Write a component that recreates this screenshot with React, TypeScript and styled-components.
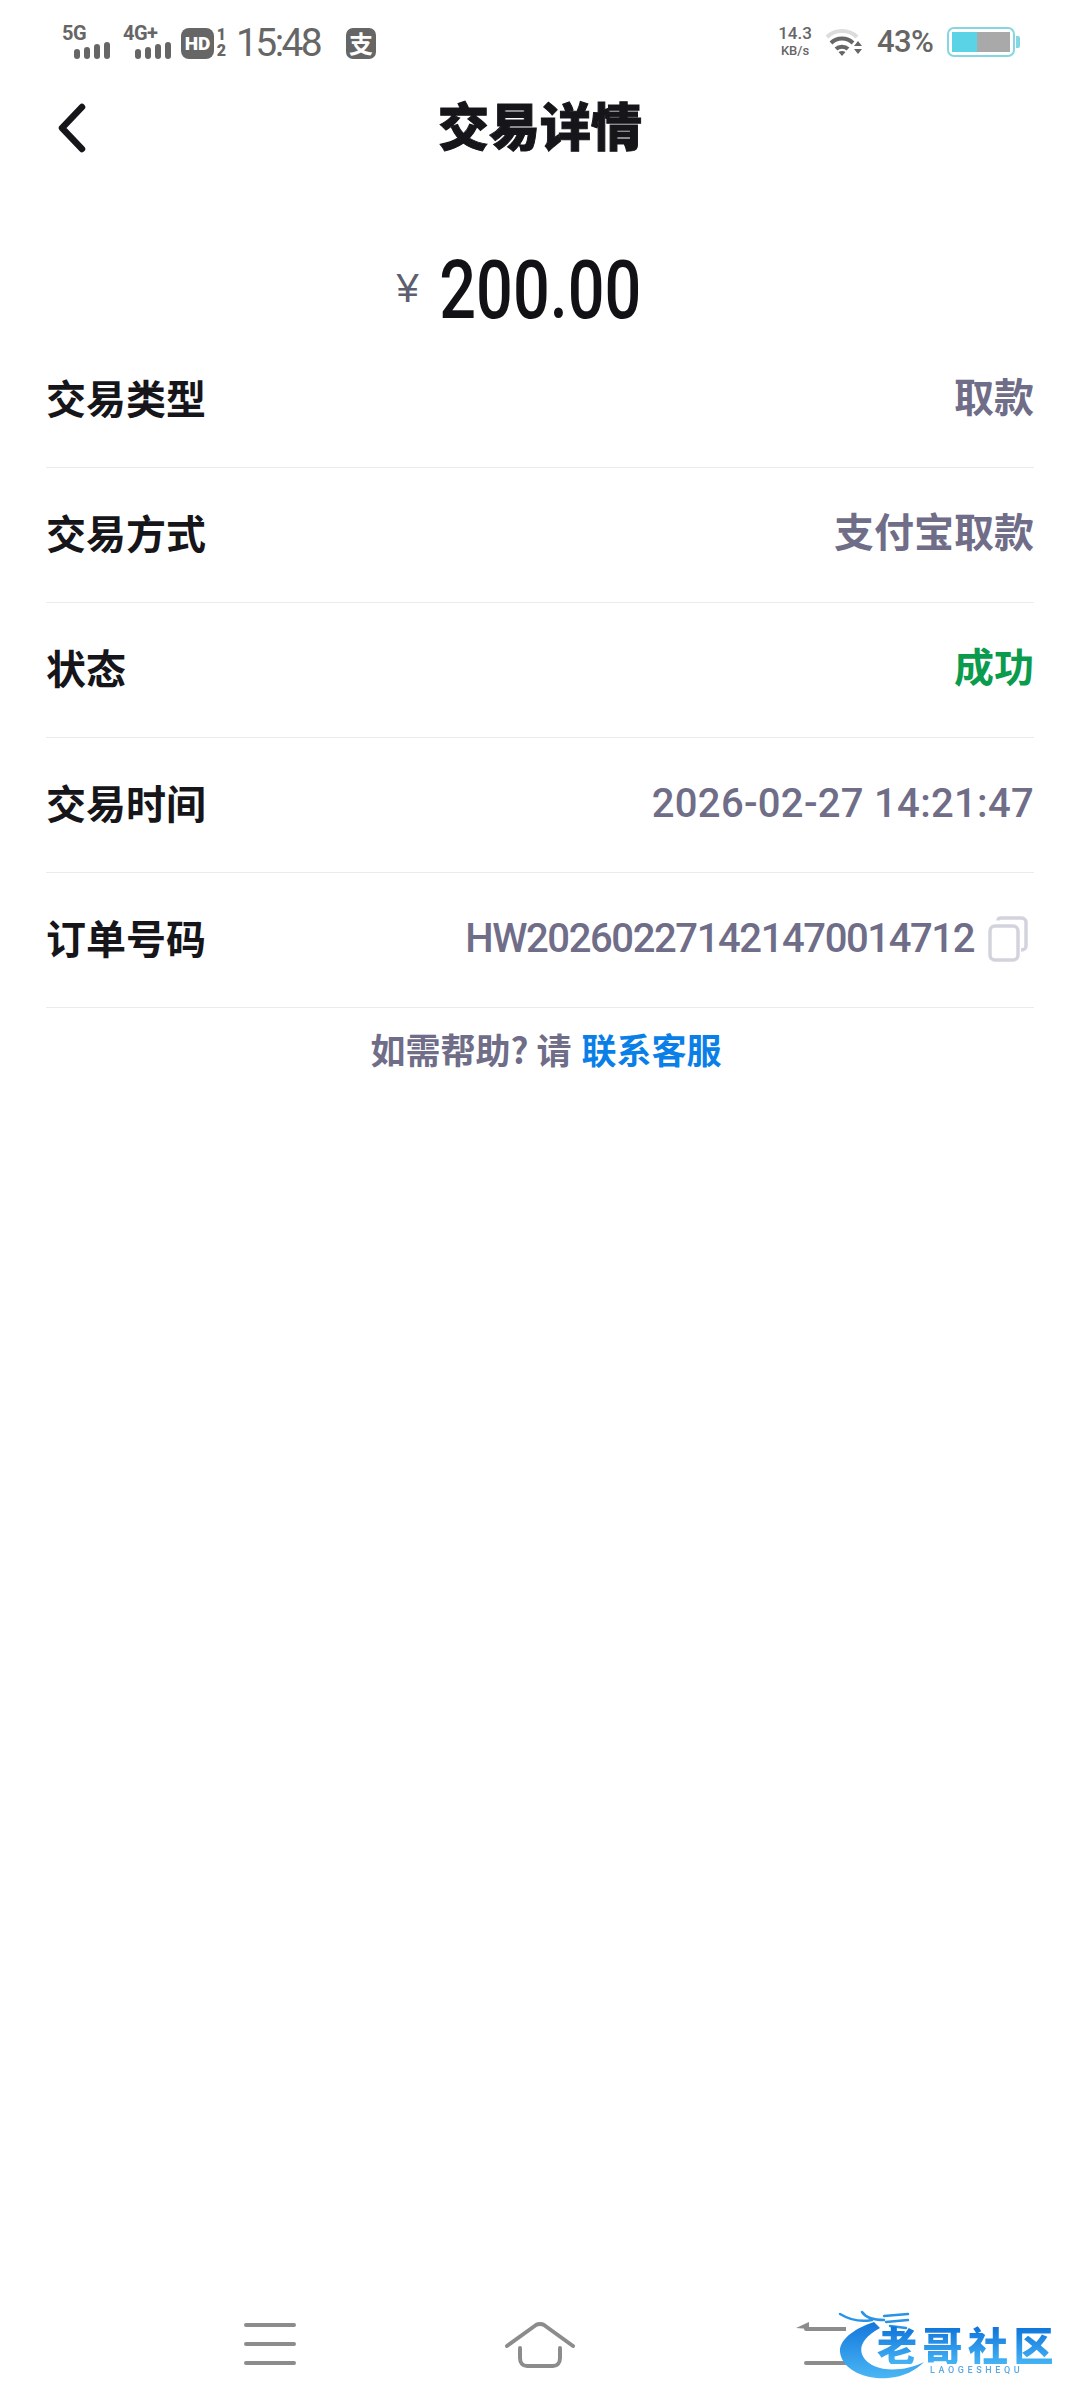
import React from "react";
import styled, { createGlobalStyle } from "styled-components";

const CJK = `"Noto Sans CJK SC", "Noto Sans", sans-serif`;

const Global = createGlobalStyle`
  html, body { margin: 0; padding: 0; background: #fff; }
  #root { width: 1080px; }
`;

const Page = styled.div`
  width: 1080px;
  height: 2408px;
  display: flex;
  flex-direction: column;
  background: #fff;
  overflow: hidden;
  font-family: ${CJK};
`;

const StatusBar = styled.div`
  height: 70px;
  box-sizing: border-box;
  padding: 24px 60px 0 62px;
  display: flex;
  justify-content: space-between;
  align-items: flex-start;
  color: #666;
`;

const StatusGroup = styled.div`
  display: flex;
  align-items: flex-start;
`;

const Signal = styled.div<{ $gap: number }>`
  width: 48px;
  height: 36px;
  margin-right: ${(p) => p.$gap}px;
  display: flex;
  flex-direction: column;
  align-items: flex-start;
`;

const SignalLabel = styled.span`
  font: 700 20px/19px "Roboto", sans-serif;
  letter-spacing: -0.5px;
  color: #666;
`;

const SignalBars = styled.svg`
  align-self: flex-end;
  margin-top: -1px;
`;

const HdBadge = styled.span`
  width: 33px;
  height: 31px;
  margin-top: 4px;
  background: #666;
  border-radius: 8px;
  color: #fff;
  font: 900 19px/31px "Roboto", sans-serif;
  text-align: center;
`;

const SimStack = styled.span`
  width: 11px;
  margin: 3px 9px 0 2px;
  display: flex;
  flex-direction: column;
  font: 900 16px/16px "Roboto", sans-serif;
  color: #666;
  text-align: center;
`;

const Clock = styled.span`
  font: 400 39px/38px "Roboto", sans-serif;
  letter-spacing: -2.6px;
  color: #666;
  width: 110px;
`;

const AppBadge = styled.span`
  width: 30px;
  height: 31px;
  margin-top: 4px;
  background: #666;
  border-radius: 7px;
  color: #fff;
  font: 700 24px/30px ${CJK};
  text-align: center;
`;

const Speed = styled.span`
  display: flex;
  flex-direction: column;
  align-items: center;
  width: 34px;
  margin-right: 14px;
  font-family: "Roboto", sans-serif;
  font-weight: 500;
  color: #666;
`;

const SpeedValue = styled.span`
  font-size: 17px;
  line-height: 19px;
`;

const SpeedUnit = styled.span`
  font-size: 13px;
  line-height: 15px;
`;

const WifiIcon = styled.svg`
  margin: 4px 15px 0 0;
`;

const Percent = styled.span`
  font: 500 31px/36px "Roboto", sans-serif;
  letter-spacing: -0.6px;
  color: #666;
  width: 56px;
  margin-right: 14px;
`;

const Battery = styled.span`
  width: 68px;
  height: 30px;
  box-sizing: border-box;
  margin-top: 3px;
  padding: 3px;
  border: 2px solid #84d6e2;
  border-radius: 7px;
  display: flex;
`;

const BatteryFill = styled.span<{ $color: string; $w: number }>`
  width: ${(p) => p.$w}px;
  background: ${(p) => p.$color};
`;

const BatteryTip = styled.span`
  width: 4px;
  height: 12px;
  margin: 12px 0 0 1px;
  background: #84d6e2;
  border-radius: 0 2px 2px 0;
`;

const Header = styled.header`
  height: 116px;
  display: grid;
  grid-template-columns: 1fr auto 1fr;
  align-items: center;
  padding: 0 56px;
`;

const Title = styled.h1`
  margin: 0 0 9px;
  font: 900 51px/60px ${CJK};
  color: #15151a;
  -webkit-text-stroke: 1px #15151a;
`;

const AmountRow = styled.div`
  height: 147px;
  box-sizing: border-box;
  padding-top: 64px;
  display: grid;
  grid-template-columns: 1fr auto 1fr;
  align-items: center;
  align-content: start;
`;

const Yen = styled.span`
  justify-self: end;
  margin-right: -5px;
  font: 400 40px/52px "Liberation Sans", sans-serif;
  color: #5d5f70;
  margin-top: -6px;
`;

const Amount = styled.span`
  display: inline-block;
  font: 500 81px/82px "Roboto", sans-serif;
  color: #121216;
  transform: scaleX(0.8);
`;

const List = styled.div`
  margin: 0 46px;
`;

const Row = styled.div`
  height: 135px;
  box-sizing: border-box;
  border-bottom: 1px solid #ebebee;
  display: flex;
  align-items: center;
  justify-content: space-between;
  padding-bottom: 2px;
`;

const Label = styled.span`
  margin-bottom: 5px;
  font: 700 40px/50px ${CJK};
  color: #15151a;
`;

const Value = styled.span<{ $color?: string; $weight?: number; $track?: number }>`
  font: ${(p) => p.$weight ?? 700} 40px/50px "Roboto", ${CJK};
  letter-spacing: ${(p) => p.$track ?? 0}px;
  color: ${(p) => p.$color ?? "#6f6d88"};
`;

const ValueGroup = styled.span`
  display: flex;
  align-items: center;
  gap: 14px;
`;

const CopyIcon = styled.svg`
  margin-right: 6px;
`;

const Help = styled.div`
  height: 84px;
  box-sizing: border-box;
  padding: 0 0 2px 12px;
  display: flex;
  align-items: center;
  justify-content: center;
  gap: 10px;
  font: 700 35px/44px ${CJK};
  color: #6f6d88;
`;

const HelpLink = styled.span`
  color: #0a7fe8;
`;

const NavBar = styled.nav`
  position: relative;
  margin-top: auto;
  height: 128px;
  box-sizing: border-box;
  padding: 42px 135px 0;
  display: grid;
  grid-template-columns: repeat(3, 270px);
  align-items: start;
  justify-items: center;
`;

const NavIcon = styled.svg<{ $shift?: number }>`
  margin-left: ${(p) => p.$shift ?? 0}px;
`;

const Logo = styled.div`
  position: absolute;
  left: 836px;
  top: 30px;
  width: 232px;
  height: 76px;
  filter: blur(0.6px);
`;

const LogoRing = styled.svg`
  position: absolute;
  left: 0;
  top: 0;
`;

const LogoName = styled.span`
  position: absolute;
  left: 41px;
  top: 14px;
  font: 900 40px/40px ${CJK};
  letter-spacing: 5.5px;
  white-space: nowrap;
  background: linear-gradient(180deg, #0b6fd8, #45b4f5);
  -webkit-background-clip: text;
  background-clip: text;
  color: transparent;
`;

const LogoSub = styled.span`
  position: absolute;
  left: 94px;
  top: 55px;
  font: 500 9px/11px "Roboto", sans-serif;
  letter-spacing: 3.6px;
  color: #5aa9e6;
  white-space: nowrap;
`;

const Bars = () => (
  <SignalBars width="36" height="18" viewBox="0 0 36 18" fill="#666">
    <rect x="0" y="7" width="6" height="10" rx="3" />
    <rect x="10" y="5" width="6" height="12" rx="3" />
    <rect x="20" y="2" width="6" height="15" rx="3" />
    <rect x="30" y="0" width="6" height="17" rx="3" />
  </SignalBars>
);

const rows: { label: string; value: string; color?: string; weight?: number; track?: number }[] = [
  { label: "交易类型", value: "取款" },
  { label: "交易方式", value: "支付宝取款" },
  { label: "状态", value: "成功", color: "#0a9b4d" },
  { label: "交易时间", value: "2026-02-27 14:21:47", weight: 500, track: 0.3 },
];

export default function App() {
  return (
    <Page>
      <Global />
      <StatusBar>
        <StatusGroup>
          <Signal $gap={13}>
            <SignalLabel>5G</SignalLabel>
            <Bars />
          </Signal>
          <Signal $gap={10}>
            <SignalLabel>4G+</SignalLabel>
            <Bars />
          </Signal>
          <HdBadge>HD</HdBadge>
          <SimStack>
            <span>1</span>
            <span>2</span>
          </SimStack>
          <Clock>15:48</Clock>
          <AppBadge>支</AppBadge>
        </StatusGroup>
        <StatusGroup>
          <Speed>
            <SpeedValue>14.3</SpeedValue>
            <SpeedUnit>KB/s</SpeedUnit>
          </Speed>
          <WifiIcon width="36" height="30" viewBox="0 0 36 30" fill="none" strokeLinecap="butt">
            <path d="M1 9C9 1 23 1 31 9" stroke="#dcdcdc" strokeWidth="4" />
            <path d="M5 15C11 9 21 9 27 15" stroke="#666" strokeWidth="4" />
            <path d="M10 21C13 18 19 18 22 21" stroke="#666" strokeWidth="4" />
            <path d="M12.5 24L16 28L19.5 24C17.5 22.8 14.5 22.8 12.5 24Z" fill="#666" />
            <path d="M28 18L32 13L36 18ZM28 21L36 21L32 26Z" fill="#666" />
          </WifiIcon>
          <Percent>43%</Percent>
          <Battery>
            <BatteryFill $color="#5bd3e6" $w={25} />
            <BatteryFill $color="#a9a9a9" $w={33} />
          </Battery>
          <BatteryTip />
        </StatusGroup>
      </StatusBar>

      <Header>
        <svg width="32" height="52" viewBox="0 0 32 52" fill="none">
          <path d="M26 5L6 26L26 47" stroke="#15151a" strokeWidth="6.5" strokeLinecap="round" strokeLinejoin="round" />
        </svg>
        <Title>交易详情</Title>
      </Header>

      <AmountRow>
        <Yen>¥</Yen>
        <Amount>200.00</Amount>
      </AmountRow>

      <List>
        {rows.map((r) => (
          <Row key={r.label}>
            <Label>{r.label}</Label>
            <Value $color={r.color} $weight={r.weight} $track={r.track}>
              {r.value}
            </Value>
          </Row>
        ))}
        <Row>
          <Label>订单号码</Label>
          <ValueGroup>
            <Value $weight={500} $track={-1.4}>
              HW202602271421470014712
            </Value>
            <CopyIcon width="40" height="46" viewBox="0 0 40 46" fill="none" stroke="#d3d3de" strokeWidth="3.5">
              <path d="M10 4.5C10 2.5 11.5 2 13 2H33C35.5 2 38 3.5 38 6V30C38 32 36.5 34 33 34" />
              <rect x="2" y="10" width="28" height="34" rx="5" fill="#fff" />
            </CopyIcon>
          </ValueGroup>
        </Row>
      </List>

      <Help>
        <span>如需帮助? 请</span>
        <HelpLink>联系客服</HelpLink>
      </Help>

      <NavBar>
        <NavIcon width="52" height="44" viewBox="0 0 52 44" fill="none" stroke="#8c8c8c" strokeWidth="4" strokeLinecap="round">
          <path d="M2 3H50M2 22H50M2 41H50" />
        </NavIcon>
        <NavIcon width="70" height="46" viewBox="0 0 70 46" fill="none" stroke="#8c8c8c" strokeWidth="4" strokeLinecap="round" strokeLinejoin="round">
          <path d="M2 24L31 3C33 1.8 37 1.8 39 3L68 24" />
          <path d="M15 26V36C15 41 18 44 22 44H48C52 44 55 41 55 36V26" />
        </NavIcon>
        <NavIcon $shift={22} width="50" height="44" viewBox="0 0 50 44" fill="none" stroke="#8c8c8c" strokeWidth="4" strokeLinecap="round">
          <path d="M10 7H50M10 41H50" />
          <path d="M0 6L13 0V7Z" fill="#8c8c8c" stroke="none" />
        </NavIcon>
        <Logo>
          <LogoRing width="232" height="76" viewBox="0 0 232 76" fill="none">
            <defs>
              <linearGradient id="ring" x1="0" y1="0" x2="0" y2="1">
                <stop offset="0" stopColor="#1377dc" />
                <stop offset="1" stopColor="#4ab6f4" />
              </linearGradient>
            </defs>
            <path d="M38 12C14 20 3 32 4 42C6 60 30 70 52 68C68 67 80 60 88 52C72 60 52 62 38 56C22 48 18 32 44 18Z" fill="url(#ring)" />
            <path d="M4 4C14 10 26 12 36 10M26 2C30 8 40 10 48 10M48 6L72 4M50 12L72 10M54 16L70 18" stroke="#2a93e8" strokeWidth="2.5" strokeLinecap="round" />
          </LogoRing>
          <LogoName>老哥社区</LogoName>
          <LogoSub>LAOGESHEQU</LogoSub>
        </Logo>
      </NavBar>
    </Page>
  );
}
